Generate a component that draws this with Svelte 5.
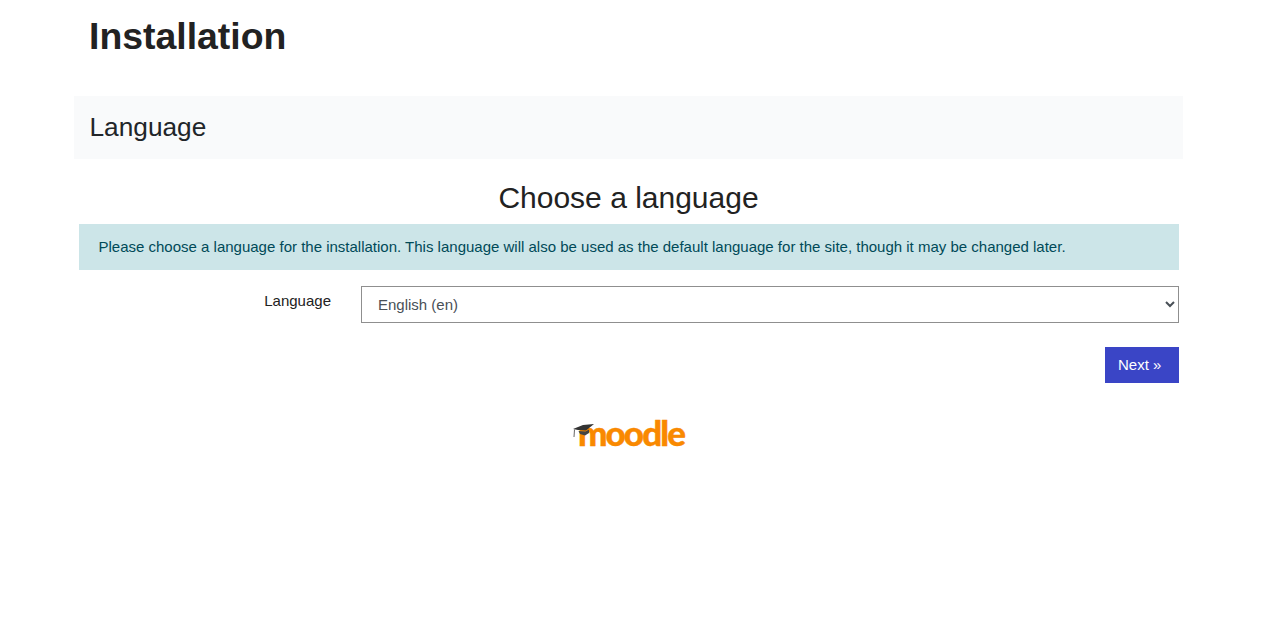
<script>
	let language = 'en';
</script>

<svelte:head>
	<title>Installation</title>
</svelte:head>

<div class="page">
	<h1>Installation</h1>
	<h2 class="panel">Language</h2>
	<form>
		<h3>Choose a language</h3>
		<div class="notice">
			Please choose a language for the installation. This language will also be used as the default language for the site, though it may be changed later.
		</div>
		<div class="row">
			<label for="lang">Language</label>
			<select id="lang" bind:value={language}>
				<option value="en">English (en)</option>
			</select>
		</div>
		<div class="actions">
			<button type="button">Next »</button>
		</div>
	</form>
	<div class="logo">
		<span>moodle</span>
		<svg class="cap" width="22" height="17" viewBox="0 0 22 17" aria-hidden="true">
			<path d="M0 6 L10 2 L21 1 L13 7.5 L5 7 Z" fill="#333" />
			<path d="M5.5 8 L12.5 8.6 L16 6.4 L16 10 L12 12.5 L7 11 Z" fill="#444" />
			<path d="M1.5 6.5 L1 14" stroke="#666" stroke-width="1" fill="none" />
		</svg>
	</div>
</div>

<style>
	:global(body) {
		background: #fff;
		color: #212529;
		font-family: "Liberation Sans", Arial, sans-serif;
	}

	.page {
		width: 1109px;
		margin-left: 74px;
	}

	h1 {
		margin: 0;
		padding: 13px 0 0 15px;
		font-size: 37.4px;
		line-height: 46px;
		font-weight: 700;
		color: #222;
	}

	.panel {
		margin: 37px 0 0;
		padding: 15px 16px;
		height: 63px;
		box-sizing: border-box;
		background: #f9fafb;
		font-size: 26.25px;
		line-height: 33px;
		font-weight: 400;
		text-indent: -0.5px;
	}

	form {
		padding: 0 4px 0 5px;
	}

	h3 {
		margin: 22px 1px 9px 0;
		text-align: center;
		font-size: 30px;
		line-height: 34px;
		font-weight: 400;
		color: #222;
	}

	.notice {
		padding: 12px 19.5px 13px;
		background: #cce5e8;
		color: #004a58;
		font-size: 15px;
		line-height: 21px;
	}

	.row {
		display: flex;
		margin-top: 16px;
	}

	label {
		width: 252px;
		padding-top: 5px;
		text-align: right;
		font-size: 15px;
		line-height: 20px;
		color: #222;
	}

	select {
		margin-left: 30px;
		flex: 1;
		height: 37px;
		padding: 0 12px;
		border: 1px solid #8f8f8f;
		border-radius: 0;
		background: #fff;
		color: #495057;
		font-family: inherit;
		font-size: 15px;
	}

	.actions {
		display: flex;
		justify-content: flex-end;
		margin-top: 24px;
	}

	button {
		width: 74px;
		height: 36px;
		padding: 0 13px 2px;
		border: 0;
		background: #3a45c6;
		color: #fff;
		font-family: inherit;
		font-size: 15px;
		text-align: left;
	}

	.logo {
		display: flex;
		justify-content: center;
		align-items: center;
		position: relative;
		margin-top: 31px;
		height: 36px;
		color: #f98900;
		font-family: Lato, sans-serif;
		font-size: 35px;
		font-weight: 900;
		letter-spacing: -1.9px;
		-webkit-text-stroke: 0.4px #f98900;
	}

	.logo span {
		margin-left: 5px;
	}

	.cap {
		position: absolute;
		left: 499px;
		top: 9px;
	}
</style>
